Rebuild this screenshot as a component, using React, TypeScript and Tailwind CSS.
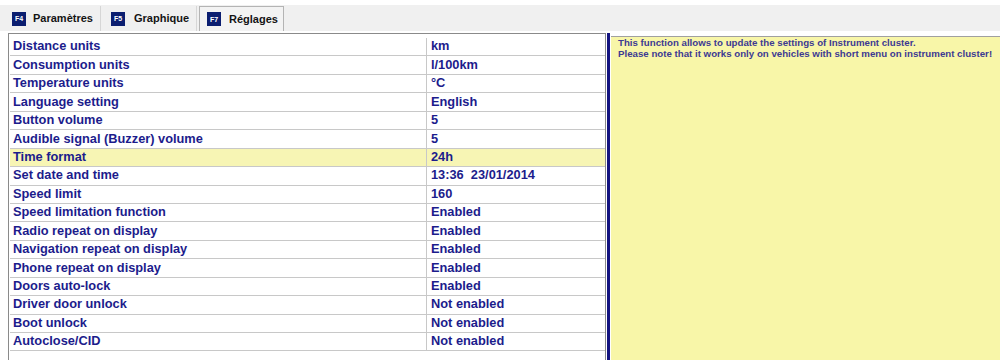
import React from "react";

const rows: [string, string][] = [
  ["Distance units", "km"],
  ["Consumption units", "l/100km"],
  ["Temperature units", "°C"],
  ["Language setting", "English"],
  ["Button volume", "5"],
  ["Audible signal (Buzzer) volume", "5"],
  ["Time format", "24h"],
  ["Set date and time", "13:36  23/01/2014"],
  ["Speed limit", "160"],
  ["Speed limitation function", "Enabled"],
  ["Radio repeat on display", "Enabled"],
  ["Navigation repeat on display", "Enabled"],
  ["Phone repeat on display", "Enabled"],
  ["Doors auto-lock", "Enabled"],
  ["Driver door unlock", "Not enabled"],
  ["Boot unlock", "Not enabled"],
  ["Autoclose/CID", "Not enabled"],
];

const Badge = ({ k }: { k: string }) => (
  <span className="w-[14px] h-[14px] bg-[#0b1e70] text-white text-[7px] font-bold flex items-center justify-center leading-none shrink-0">
    {k}
  </span>
);

export default function App() {
  return (
    <div className="w-[1000px] h-[360px] bg-white overflow-hidden font-['Liberation_Sans',Arial,sans-serif]">
      {/* Tab strip */}
      <div className="mt-[5px] h-[26px] bg-[#f0f0f0] flex items-end pl-[8px] text-[11px] font-bold text-[#141414]">
        <div className="w-[93px] h-[25px] flex items-center gap-[7px] pl-[4px] border-r border-[#d6d6d6]">
          <Badge k="F4" />
          <span>Paramètres</span>
        </div>
        <div className="w-[96px] h-[25px] flex items-center gap-[9px] pl-[10px] border-r border-[#d6d6d6]">
          <Badge k="F5" />
          <span>Graphique</span>
        </div>
        <div className="ml-[2px] w-[85px] h-[25px] flex items-center gap-[8px] pl-[7px] border border-b-0 border-[#b4b4b4] bg-[#f3f3f3]">
          <Badge k="F7" />
          <span>Réglages</span>
        </div>
      </div>

      <div className="flex h-[329px] pt-[2px]">
        {/* Settings table */}
        <div className="ml-[8px] w-[598px] border-l border-t border-r border-[#8a8a8a] pl-[1px] pt-[4px]">
          {rows.map(([name, value]) => (
            <div
              key={name}
              className={
                "flex h-[18.44px] border-b border-[#c8c8c8] text-[12.8px] font-bold text-[#1c1c8c] leading-none " +
                (name === "Time format" ? "bg-[#f7f5b4]" : "")
              }
            >
              <div className="w-[416px] flex items-center pl-[3px]">{name}</div>
              <div className="flex-1 flex items-center pl-[4px] border-l border-[#c8c8c8] whitespace-pre">{value}</div>
            </div>
          ))}
        </div>

        {/* Help panel */}
        <div className="ml-[1px] w-[3px] bg-[#141480]" />
        <div className="ml-[1px] flex-1 bg-[#f8f6a8] border-t border-[#a0a0a0] mt-[3px] pl-[7px] text-[9.7px] font-bold text-[#3d3a92] leading-[11px] whitespace-nowrap">
          <div>This function allows to update the settings of Instrument cluster.</div>
          <div>Please note that it works only on vehicles with short menu on instrument cluster!</div>
        </div>
      </div>
    </div>
  );
}
